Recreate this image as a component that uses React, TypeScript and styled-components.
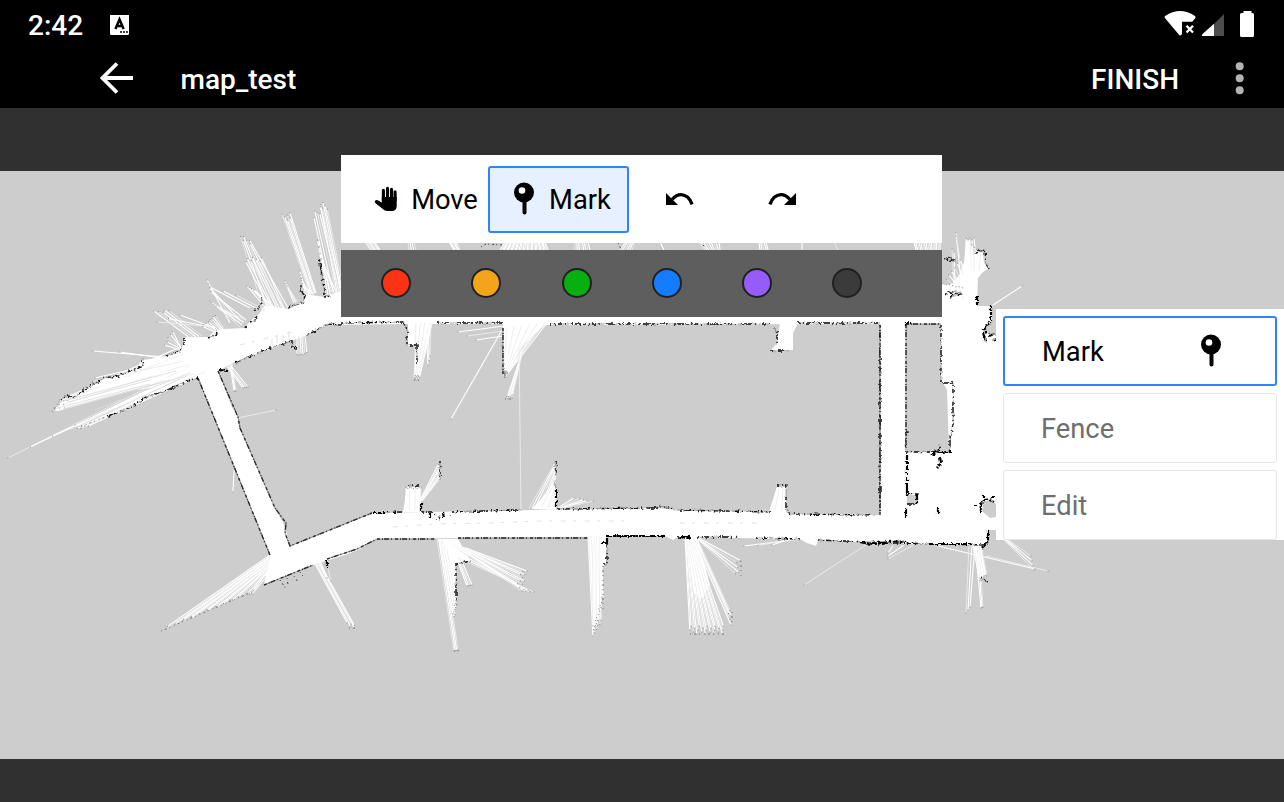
import React from "react";
import styled, { createGlobalStyle } from "styled-components";

const GlobalStyle = createGlobalStyle`
  * { box-sizing: border-box; }
  body { margin: 0; background: #303030; font-family: Roboto, "Liberation Sans", sans-serif; }
  svg { display: block; }
  button { font: inherit; border: 0; padding: 0; background: none; color: inherit; }
`;

const Screen = styled.div`
  width: 1284px;
  height: 802px;
  display: flex;
  flex-direction: column;
  overflow: hidden;
  background: #303030;
`;

const StatusBar = styled.div`
  height: 50px;
  flex: none;
  display: flex;
  align-items: center;
  padding: 0 30px 0 28px;
  background: #000;
  color: #fff;
`;

const Clock = styled.span`
  font-size: 28px;
  font-weight: 500;
  line-height: 50px;
  padding-top: 1px;
  width: 82px;
`;

const StatusIcons = styled.div`
  margin-left: auto;
  display: flex;
  align-items: center;
`;

const AppBar = styled.header`
  height: 58px;
  flex: none;
  display: flex;
  align-items: center;
  padding: 0 38px 2px 100px;
  background: #000;
  color: #fff;
`;

const Title = styled.h1`
  margin: 4px 0 0 47.5px;
  flex: 1;
  font-size: 28px;
  font-weight: 500;
  line-height: 32px;
`;

const FinishButton = styled.button`
  margin: 4px 54px 0 0;
  font-size: 28px;
  font-weight: 500;
  line-height: 32px;
`;

const Stage = styled.main`
  flex: 1;
  position: relative;
  padding: 63px 0 43px;
`;

const Tools = styled.section`
  position: absolute;
  left: 341px;
  top: 47px;
  width: 601px;
  display: flex;
  flex-direction: column;
  gap: 7px;
`;

const ToolRow = styled.div`
  height: 88px;
  padding: 0 22px;
  display: flex;
  align-items: center;
  background: #fff;
`;

const ToolButton = styled.button<{ $active?: boolean; $width: number; $gap: number; $shift?: number }>`
  width: ${(p) => p.$width}px;
  height: 67px;
  display: flex;
  align-items: center;
  justify-content: center;
  gap: ${(p) => p.$gap}px;
  padding-left: ${(p) => p.$shift ?? 0}px;
  font-size: 27.3px;
  color: #000;
  border: 2.5px solid ${(p) => (p.$active ? "#2f83ff" : "transparent")};
  border-radius: 3px;
  background: ${(p) => (p.$active ? "#e6f0ff" : "transparent")};
`;

const Label = styled.span`
  padding-top: 2px;
`;

const Palette = styled.div`
  height: 67px;
  padding: 0 0 2px 40px;
  display: flex;
  align-items: center;
  gap: 60.3px;
  background: #5e5e5e;
`;

const Swatch = styled.button<{ $color: string }>`
  width: 30px;
  height: 30px;
  flex: none;
  border-radius: 50%;
  border: 2px solid #202020;
  background: ${(p) => p.$color};
`;

const SidePanel = styled.aside`
  position: absolute;
  left: 996px;
  top: 201px;
  width: 288px;
  height: 231px;
  padding: 7px 7px 0;
  display: flex;
  flex-direction: column;
  gap: 7px;
  background: #fff;
`;

const PanelItem = styled.button<{ $active?: boolean }>`
  height: 70px;
  flex: none;
  display: flex;
  align-items: center;
  justify-content: space-between;
  padding: ${(p) => (p.$active ? "0 52px 0 37px" : "2px 54px 0 37px")};
  font-size: 27.3px;
  color: ${(p) => (p.$active ? "#000" : "#6e6e6e")};
  border: ${(p) => (p.$active ? "2.5px solid #2f83ff" : "1px solid #e6e6e6")};
  border-radius: 3px;
`;

const PinIcon = () => (
  <svg width="24" height="34" viewBox="0 0 24 34">
    <circle cx="12" cy="10.5" r="10" />
    <path d="M12.5 20v10.500" stroke="#000" strokeWidth="4" strokeLinecap="round" />
    <circle cx="10" cy="8.5" r="3.3" fill="#fff" />
  </svg>
);

const HandIcon = () => (
  <svg width="24" height="26" viewBox="0 0 24 26">
    <g fill="none" stroke="#000" strokeLinecap="round">
      <path d="M9.4 14V4.2M13.5 14V2.2M17.5 14V3.2M21.1 14V5.8" strokeWidth="3.1" />
      <path d="M2.6 15.8L8 19.5" strokeWidth="3.6" />
    </g>
    <path d="M7.8 11H22.7V20q0 5-5 5h-4.5q-2.5 0-4.4-2L2.2 17.4 4 14.4l3.8 2z" />
  </svg>
);

const CurveArrow = ({ flip }: { flip?: boolean }) => (
  <svg width="28" height="14" viewBox="0 0 28 14">
    <g transform={flip ? "translate(28 0) scale(-1 1)" : undefined}>
      <path d="M0 1V13H12z" />
      <path d="M6 7.5Q10.5 2.6 15.2 2.7Q22.8 3.2 26.1 12.4" fill="none" stroke="#000" strokeWidth="3.3" />
    </g>
  </svg>
);

type P = [number, number];

/* Each fan spreads n rays from segment a-b to segment c-d. */
const fans: [P, P, P, P, number][] = [
  [[190, 366], [205, 372], [8, 458], [75, 425], 4],
  [[178, 348], [195, 374], [60, 400], [53, 411], 9],
  [[180, 358], [188, 368], [95, 378], [88, 388], 4],
  [[188, 375], [194, 378], [72, 430], [84, 428], 5],
  [[165, 357], [175, 360], [93, 351], [120, 352], 2],
  [[190, 338], [202, 336], [154, 311], [167, 309], 5],
  [[205, 326], [215, 328], [157, 322], [180, 315], 3],
  [[188, 352], [182, 350], [164, 345], [172, 330], 5],
  [[230, 323], [246, 320], [207, 280], [211, 292], 4],
  [[240, 327], [246, 320], [210, 301], [216, 306], 4],
  [[250, 308], [265, 310], [210, 287], [236, 295], 3],
  [[215, 332], [225, 330], [202, 326], [215, 315], 8],
  [[264, 312], [288, 308], [240, 235], [249, 239], 6],
  [[268, 305], [284, 308], [244, 258], [261, 257], 7],
  [[264, 306], [275, 308], [247, 286], [254, 290], 4],
  [[310, 294], [316, 293], [282, 214], [290, 213], 6],
  [[330, 292], [342, 292], [313, 213], [320, 205], 5],
  [[337, 292], [344, 292], [320, 203], [326, 202], 5],
  [[326, 296], [337, 294], [317, 235], [320, 256], 6],
  [[294, 303], [298, 302], [285, 281], [287, 286], 3],
  [[306, 296], [314, 294], [300, 271], [302, 286], 6],
  [[232, 364], [230, 365], [236, 391], [234, 391], 3],
  [[227, 367], [231, 366], [243, 388], [248, 387], 4],
  [[297, 336], [305, 335], [297, 356], [307, 354], 6],
  [[238, 418], [238, 418], [276, 410], [276, 410], 1],
  [[234, 470], [234, 472], [233, 492], [233, 492], 1],
  [[270, 555], [267, 572], [161, 631], [252, 592], 19],
  [[267, 570], [268, 575], [247, 594], [252, 594], 3],
  [[314, 562], [319, 562], [350, 628], [356, 628], 5],
  [[320, 560], [326, 560], [327, 578], [331, 581], 2],
  [[416, 323], [432, 323], [414, 380], [419, 380], 12],
  [[426, 323], [431, 323], [428, 365], [430, 356], 3],
  [[504, 327], [547, 323], [504, 374], [505, 377], 18],
  [[518, 365], [524, 345], [506, 399], [512, 399], 7],
  [[502, 330], [502, 330], [451, 419], [451, 419], 1],
  [[504, 326], [503, 336], [458, 332], [476, 340], 3],
  [[519, 348], [519, 348], [521, 510], [521, 510], 1],
  [[406, 510], [420, 510], [406, 487], [421, 487], 9],
  [[419, 502], [423, 500], [440, 461], [441, 478], 8],
  [[529, 508], [550, 507], [556, 461], [556, 474], 8],
  [[536, 508], [556, 507], [555, 481], [556, 487], 9],
  [[558, 508], [562, 508], [575, 497], [594, 501], 5],
  [[437, 539], [442, 539], [454, 651], [458, 650], 4],
  [[439, 540], [448, 550], [454, 620], [457, 603], 10],
  [[460, 548], [458, 558], [528, 593], [534, 592], 5],
  [[453, 545], [466, 548], [522, 591], [527, 571], 11],
  [[457, 559], [461, 559], [467, 586], [472, 585], 4],
  [[588, 536], [601, 536], [593, 638], [603, 600], 16],
  [[593, 545], [600, 545], [593, 633], [601, 625], 8],
  [[685, 538], [693, 538], [690, 634], [726, 634], 22],
  [[693, 538], [697, 538], [731, 625], [732, 615], 5],
  [[696, 538], [699, 538], [738, 576], [741, 561], 5],
  [[770, 511], [784, 511], [778, 485], [784, 485], 7],
  [[800, 539], [790, 539], [744, 546], [772, 545], 3],
  [[866, 545], [866, 545], [804, 585], [804, 585], 1],
  [[893, 546], [915, 544], [888, 553], [888, 559], 3],
  [[938, 546], [986, 556], [1035, 569], [1048, 571], 2],
  [[969, 544], [975, 544], [966, 613], [970, 607], 3],
  [[975, 544], [979, 544], [981, 608], [983, 607], 3],
  [[974, 550], [982, 550], [980, 582], [987, 576], 11],
  [[1002, 538], [1006, 538], [1034, 570], [1031, 556], 4],
  [[990, 307], [990, 307], [1022, 286], [1022, 286], 1],
  [[961, 280], [963, 276], [956, 233], [956, 236], 2],
  [[954, 286], [955, 284], [952, 249], [954, 252], 2],
  [[966, 272], [977, 270], [966, 237], [974, 238], 5],
  [[972, 272], [979, 270], [972, 245], [981, 250], 5],
  [[952, 284], [966, 276], [946, 279], [960, 259], 6],
  [[944, 300], [968, 300], [943, 283], [962, 287], 7],
  [[371, 250], [380, 250], [365, 242], [375, 242], 7],
  [[409, 250], [416, 250], [408, 242], [414, 242], 4],
  [[454, 250], [460, 250], [449, 242], [457, 242], 6],
  [[500, 250], [548, 250], [505, 242], [545, 242], 36],
  [[575, 250], [590, 250], [575, 242], [588, 242], 8],
  [[620, 250], [632, 250], [626, 242], [635, 242], 6],
  [[664, 250], [664, 250], [660, 242], [660, 242], 1],
  [[705, 250], [720, 250], [698, 242], [719, 242], 9],
  [[760, 250], [768, 250], [759, 242], [766, 242], 5],
  [[802, 250], [802, 250], [802, 242], [802, 242], 1],
  [[838, 250], [838, 250], [834, 242], [834, 242], 1],
  [[916, 250], [940, 250], [914, 242], [940, 242], 16],
];

const mix = (a: P, b: P, t: number): P => [a[0] + (b[0] - a[0]) * t, a[1] + (b[1] - a[1]) * t];

const rays = fans.flatMap(([a, b, c, d, n], f) =>
  Array.from({ length: n }, (_, i) => {
    const t = n === 1 ? 0 : i / (n - 1);
    const from = mix(a, b, t);
    const end = mix(c, d, t);
    const to = mix(from, end, n > 4 && c[1] !== 242 ? 1 - ((i * 7 + f * 3) % 5) * 0.02 : 1);
    return { from, to, solid: (i + f) % 3 !== 0 };
  })
);

const straightWalls = [
  "M198 378L270 555M218 371L238 417L240 428L275 508L286 523L285 533L290 546L372 513",
  "M264 585L313 565M327 559L357 549L377 539H435M458 538H588",
  "M906 325V452M906 324H941M880 325V515M503 328V374",
];

const roughWalls = [
  "M60 400L67 396L75 397L88 387L100 381L103 378L118 376L135 369M142 360L143 365L134 371",
  "M167 356L180 351L184 344L184 338M208 338L217 334L216 329",
  "M245 328L246 326M250 322L257 319L256 316M254 311L260 307L262 298",
  "M289 309L290 306L303 303L305 296L301 291L301 285M324 297L332 296M325 295L322 276L319 257",
  "M341 325L328 324L305 336M292 341L292 347L297 348M291 341L262 351L235 363",
  "M198 378L190 380L165 391L146 397L130 408L108 416",
  "M372 513L402 512M421 512L433 512L440 519M452 512L520 510M558 509L657 508L660 506L677 510L771 512M789 514L877 515",
  "M606 536L665 536M678 538H690M697 537L738 537M756 538L800 539M818 540L895 543L986 545",
  "M341 323L403 322L407 329V345H417V363M437 323H503M550 324H664L770 324M798 323H880",
  "M941 325L941 383H953V424L950 438V452H938M906 452H935M880 325V515M907 430L905 450",
  "M907 494H917V504H907M440 461V478M407 486H421M556 461V475M777 485H786V508L791 517M771 351H790",
  "M774 328L777 332V345M942 258L954 261M978 250L985 251L986 264L989 269M976 253L984 250",
  "M456 564V600M456 564L471 561M603 564H607V543M945 295L948 291L953 295L960 292M980 577L988 582",
  "M950 297L961 294L957 291L949 292M943 259L950 257L956 262",
];

const faintWalls = [
  "M690 634H726M732 612V625M741 561V576M161 631L252 592M456 600L457 605M502 345L505 378M414 380H419",
  "M603 566L603 610M349 628H357M454 651H459M505 399H512M108 416L80 427M52 412L60 400",
];

const boldWalls = [
  "M556 489V508M907 454V496M906 508V517M917 494V504",
  "M938 508V514M932 455L938 450L941 446M940 457L941 463L937 468M938 452H952",
  "M981 512C979 498 987 498 994 502M988 530V541L982 548",
  "M991 305V321L984 329L987 334M983 333L986 341M988 336L995 334M993 341L996 340M977 295V306",
  "M607 538V545M606 543H602M680 537H690M219 370L228 371M327 560V568",
  "M606 536H665M860 542Q872 545 882 543T905 542M928 544H971M372 513H385",
  "M421 503V512M430 513L430 518M906 326V323H911M443 512L444 518M975 505H977M984 498V495M992 497H995",
];

const MapView = () => (
  <svg width="1284" height="588" viewBox="0 171 1284 588">
    <defs>
      <filter id="rough" filterUnits="userSpaceOnUse" x="0" y="171" width="1284" height="588">
        <feTurbulence type="fractalNoise" baseFrequency="0.35" numOctaves="2" seed="4" result="n" />
        <feDisplacementMap in="SourceGraphic" in2="n" scale="4" xChannelSelector="R" yChannelSelector="G" />
      </filter>
    </defs>
    <rect y="171" width="1284" height="588" fill="#cdcdcd" />
    <path
      fill="#fff"
      d="M55 411L62 400L75 398L88 387L105 378L118 376L135 370L142 360L167 357L180 351L186 337H208L216 330L225 329L245 328L250 321L259 314L265 305L289 309L304 301L305 294L324 297L341 291H942V285L952 284L960 274L964 262L966 240L970 240L973 256L978 250L983 253L984 263L989 268L982 273L978 278L977 306H991L992 321L984 329L990 334L996 336V541H988L982 548L976 545L900 544L818 540L816 546L807 543L800 539L678 537L673 540L665 536L458 538L377 539L358 550L348 554L313 565L264 585L270 555L198 378L165 391L130 403L110 411L80 426L72 427L150 388L130 391L58 411z"
    />
    <g fill="#cdcdcd">
      <path d="M305 336L328 325L408 324V346H417L419 363L425 350L432 324H503V376L512 365L520 348L545 325L880 324V515L789 514L784 511L771 512L677 510L657 508L372 513L290 546L286 531L240 428L218 371L235 362L291 341z" />
      <path d="M906 324H941V383H952V424L949 438V452H907z" />
      <path d="M907 495H917V504H907zM984 501L991 500L996 504V517L990 518L982 511zM988 530H996V541H988zM985 328L996 321V335L988 334z" />
    </g>
    <g fill="#fff">
      <path d="M408 323H432L424 345L417 377L417 346H408zM504 323H543L527 337L518 350L505 370zM780 323H798L793 333V350H771L777 343zM407 487L421 487V512H403zM532 509L556 482V510zM778 485L786 486V512H769zM588 535H606V564L598 570L596 610L593 633zM439 539H458L470 560L456 563L456 600zM686 536H697L710 585L700 600L693 590zM972 544H984L982 558L987 577L979 579zM943 383L947 390L949 450L952 436V383zM230 406L238 413V421L230 421zM275 514L283 522L286 532L278 535z" />
    </g>
    <g fill="none" strokeWidth="1">
      {rays.map((r, i) => (
        <path
          key={i}
          d={`M${r.from[0].toFixed(1)} ${r.from[1].toFixed(1)}L${r.to[0].toFixed(1)} ${r.to[1].toFixed(1)}`}
          stroke={r.solid ? "#fff" : "#ececec"}
          strokeWidth={r.solid ? 1.1 : 0.9}
        />
      ))}
    </g>
    <g fill="#888">
      {rays.map((r, i) => (
        <rect key={i} x={r.to[0] - 0.5} y={r.to[1] - 0.5} width="1" height="1" />
      ))}
    </g>
    <g stroke="#dedede" strokeWidth="0.9" fill="none">
      <path d="M60 402L176 371M64 409L170 380M57 408L150 384M95 410L190 373M70 430L180 379M105 398L160 383M68 402L150 380M272 346V339M277 343V336M283 342V335M289 340V331" />
      <path d="M240 345L292 332M393 527L435 524L490 523L540 521H626M680 523H760" strokeDasharray="5 7 3 9" />
    </g>
    <g fill="none">
      {straightWalls.map((d) => (
        <g key={d}>
          <path d={d} strokeWidth="0.8" stroke="#777" />
          <path d={d} strokeWidth="1.4" stroke="#2a2a2a" strokeDasharray="3 2 1 1 5 2 1 3" />
        </g>
      ))}
      <g filter="url(#rough)">
        {roughWalls.map((d) => (
          <g key={d}>
            <path d={d} strokeWidth="0.8" stroke="#888" strokeDasharray="7 1 3 2 11 1" />
            <path d={d} strokeWidth="1.4" stroke="#161616" strokeDasharray="2 3 1 2 4 3 1 5 3 1 7 2" />
          </g>
        ))}
        {boldWalls.map((d) => (
          <path key={d} d={d} stroke="#000" strokeWidth="2.2" strokeDasharray="6 1 3 1" />
        ))}
      </g>
      {faintWalls.map((d) => (
        <path key={d} d={d} stroke="#777" strokeWidth="1" strokeDasharray="1 3 2 3 1 4" />
      ))}
      <path
        stroke="#444"
        strokeWidth="1"
        strokeDasharray="1 3 2 2"
        d="M280 580L286 589M287 578L288 585M294 576L298 582M300 572L303 576M481 247L486 244L502 245M618 243L621 249M700 242L705 247M436 520L441 514M450 516L452 513"
      />
    </g>
  </svg>
);

const colors = ["#fa3314", "#f2a51b", "#05b010", "#167cff", "#965cfb", "#3b3b3b"];

export default function App() {
  return (
    <>
      <GlobalStyle />
      <Screen>
        <StatusBar>
          <Clock>2:42</Clock>
          <svg width="19" height="20" viewBox="0 0 19 20">
            <rect y="-1" width="19" height="21" rx="1.5" fill="#fff" />
            <path d="M5.4 14L9.5 4.500L13.6 14M7 11H12" fill="none" stroke="#000" strokeWidth="2.5" />
            <path d="M10 17h2m1 0h2m1 0h2" stroke="#000" strokeWidth="1.4" />
          </svg>
          <StatusIcons>
            <svg width="90" height="28" viewBox="0 0 90 28">
              <path d="M1.200 5Q16-5 31 5Q32 6 31 7.500L28.300 10.800H18V23Q16.500 25.500 14.800 23.500L1.300 7.500Q0 6 1.200 5z" fill="#fff" />
              <path d="M22.500 14.800L29 21.500M29 14.800L22.500 21.500" stroke="#fff" strokeWidth="2.300" />
              <path d="M60 3V25H38z" fill="#4d4d4d" />
              <path d="M50 12.800V25H38.500q-1.500-.5 0-2z" fill="#fff" />
              <path d="M79.500 0h8v2h1q1.500 0 1.500 1.500V24.500q0 1.500-1.500 1.500H77.500q-1.500 0-1.500-1.500V3.500q0-1.500 1.500-1.500h2z" fill="#fff" />
            </svg>
          </StatusIcons>
        </StatusBar>
        <AppBar>
          <svg width="33" height="32" viewBox="0 0 33 32">
            <path d="M17 1.5L2.5 16L17 30.5M3 16H33" fill="none" stroke="#fff" strokeWidth="3.8" />
          </svg>
          <Title>map_test</Title>
          <FinishButton>FINISH</FinishButton>
          <svg width="13" height="34" viewBox="0 0 13 34" fill="#b3b3b3">
            <circle cx="6.7" cy="5.2" r="4" />
            <circle cx="6.7" cy="17.2" r="4" />
            <circle cx="6.7" cy="29.2" r="4" />
          </svg>
        </AppBar>
        <Stage>
          <MapView />
          <Tools>
            <ToolRow>
              <ToolButton $width={125} $gap={13} $shift={1}><HandIcon /><Label>Move</Label></ToolButton>
              <ToolButton $active $width={141} $gap={13} $shift={6}><PinIcon /><Label>Mark</Label></ToolButton>
              <ToolButton $width={102} $gap={0}><CurveArrow /></ToolButton>
              <ToolButton $width={102} $gap={0}><CurveArrow flip /></ToolButton>
            </ToolRow>
            <Palette>
              {colors.map((c) => <Swatch key={c} $color={c} />)}
            </Palette>
          </Tools>
          <SidePanel>
            <PanelItem $active><Label>Mark</Label><PinIcon /></PanelItem>
            <PanelItem>Fence</PanelItem>
            <PanelItem>Edit</PanelItem>
          </SidePanel>
        </Stage>
      </Screen>
    </>
  );
}
